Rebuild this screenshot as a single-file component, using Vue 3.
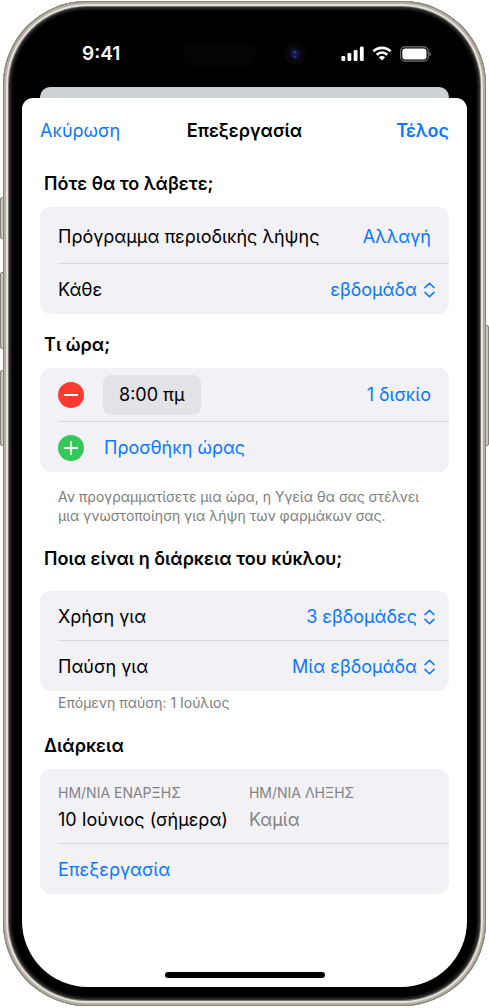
<template>
  <div class="stage">
    <span class="side-key action" />
    <span class="side-key volume-up" />
    <span class="side-key volume-down" />
    <span class="side-key power" />

    <div class="phone">
      <div class="status-bar">
        <span class="clock">9:41</span>
        <div class="island">
          <span class="speaker" />
          <svg class="camera" viewBox="0 0 24 24">
            <circle cx="12" cy="12" r="11" fill="#07060a" />
            <circle cx="12" cy="12" r="6" fill="#0c0d26" />
            <circle cx="12" cy="12" r="4" fill="#11153f" />
            <circle cx="11.5" cy="10" r="1.5" fill="#2c3a8c" />
            <circle cx="12" cy="15" r="1.3" fill="#26318a" />
          </svg>
        </div>
        <div class="status-icons">
          <svg width="23" height="15" viewBox="0 0 23 15" fill="#fff">
            <rect x="0.4" y="10" width="3.8" height="5" rx="1.2" />
            <rect x="6.5" y="7" width="3.8" height="8" rx="1.2" />
            <rect x="12.7" y="4" width="3.8" height="11" rx="1.2" />
            <rect x="18.9" y="0.5" width="3.8" height="14.5" rx="1.2" />
          </svg>
          <svg width="20" height="15" viewBox="0 0 20 15" fill="none" stroke="#fff" stroke-width="2.6">
            <path d="M1.4 5.3 C6.1 0.7 13.9 0.7 18.6 5.3" />
            <path d="M4.7 8.7 C7.7 5.8 12.3 5.8 15.3 8.7" />
            <path d="M10 14.6 L6.9 11.3 C8.7 9.7 11.3 9.7 13.1 11.3 Z" fill="#fff" stroke="none" />
          </svg>
          <svg width="32" height="16" viewBox="0 0 32 16">
            <rect x="0.6" y="0.9" width="27.6" height="14.2" rx="4.4" fill="none" stroke="#77777a" stroke-width="1.1" />
            <rect x="2.3" y="2.6" width="24.2" height="10.8" rx="3" fill="#fff" />
            <path d="M29.4 5.7 C31.4 6.5 31.4 9.5 29.4 10.3 Z" fill="#77777a" />
          </svg>
        </div>
      </div>

      <div class="sheet-behind" />
      <main class="sheet">
        <header class="nav">
          <button type="button" class="link cancel">Ακύρωση</button>
          <h1>Επεξεργασία</h1>
          <button type="button" class="link done">Τέλος</button>
        </header>

        <section>
          <h2>Πότε θα το λάβετε;</h2>
          <div class="card">
            <div class="row tall">
              <span>Πρόγραμμα περιοδικής λήψης</span>
              <button type="button" class="link">Αλλαγή</button>
            </div>
            <div class="row">
              <label for="every">Κάθε</label>
              <span class="picker">
                <select id="every" v-model="every">
                  <option>εβδομάδα</option>
                </select>
                <svg class="chevrons" viewBox="0 0 11 16"><path d="M1 5.6 L5.5 1.2 L10 5.6 M1 10.4 L5.5 14.8 L10 10.4" /></svg>
              </span>
            </div>
          </div>
        </section>

        <section>
          <h2>Τι ώρα;</h2>
          <div class="card">
            <div class="row dose">
              <button type="button" class="round remove" aria-label="Αφαίρεση">
                <svg viewBox="0 0 25 25"><path d="M6.5 12.5 H18.5" /></svg>
              </button>
              <button type="button" class="time">8:00 πμ</button>
              <button type="button" class="link amount">1 δισκίο</button>
            </div>
            <div class="row">
              <button type="button" class="add-time">
                <span class="round add">
                  <svg viewBox="0 0 25 25"><path d="M6.5 12.5 H18.5 M12.5 6.5 V18.5" /></svg>
                </span>
                Προσθήκη ώρας
              </button>
            </div>
          </div>
          <p class="hint spaced">Αν προγραμματίσετε μια ώρα, η Υγεία θα σας στέλνει μια γνωστοποίηση για λήψη των φαρμάκων σας.</p>
        </section>

        <section class="after-hint">
          <h2 class="loose">Ποια είναι η διάρκεια του κύκλου;</h2>
          <div class="card">
            <div v-for="item in cycle" :key="item.id" class="row">
              <label :for="item.id">{{ item.label }}</label>
              <span class="picker">
                <select :id="item.id" v-model="item.value">
                  <option>{{ item.value }}</option>
                </select>
                <svg class="chevrons" viewBox="0 0 11 16"><path d="M1 5.6 L5.5 1.2 L10 5.6 M1 10.4 L5.5 14.8 L10 10.4" /></svg>
              </span>
            </div>
          </div>
          <p class="hint">Επόμενη παύση: 1 Ιούλιος</p>
        </section>

        <section class="after-hint">
          <h2>Διάρκεια</h2>
          <div class="card">
            <dl class="row dates">
              <div>
                <dt>ΗΜ/ΝΙΑ ΕΝΑΡΞΗΣ</dt>
                <dd>10 Ιούνιος (σήμερα)</dd>
              </div>
              <div>
                <dt>ΗΜ/ΝΙΑ ΛΗΞΗΣ</dt>
                <dd class="muted">Καμία</dd>
              </div>
            </dl>
            <div class="row">
              <button type="button" class="link">Επεξεργασία</button>
            </div>
          </div>
        </section>

        <div class="home-indicator" />
      </main>
    </div>
  </div>
</template>

<script setup>
import { ref } from 'vue'

const every = ref('εβδομάδα')

const cycle = ref([
  { id: 'use', label: 'Χρήση για', value: '3 εβδομάδες' },
  { id: 'pause', label: 'Παύση για', value: 'Μία εβδομάδα' },
])
</script>

<style>
body {
  background: #fff;
}
</style>

<style scoped>
* {
  box-sizing: border-box;
}

.stage {
  position: relative;
  display: flex;
  min-height: 100vh;
  padding: 1px 3px 2px;
  font-family: Inter, "Liberation Sans", sans-serif;
  font-size: 18px;
  line-height: 24px;
  color: #000;
}

.side-key {
  position: absolute;
  left: 0;
  width: 6px;
  border: 1px solid #85827c;
  border-radius: 2px;
  background: #c8c5be;
}

.action {
  top: 197px;
  height: 42px;
}

.volume-up {
  top: 272px;
  height: 77px;
}

.volume-down {
  top: 370px;
  height: 76px;
}

.power {
  top: 325px;
  right: 0;
  left: auto;
  height: 121px;
}

.phone {
  position: relative;
  flex: 1;
  display: flex;
  flex-direction: column;
  padding: 7px 19px 19px;
  border-radius: 84px;
  background: #000;
  box-shadow:
    inset 0 0 0 1px #85817b,
    inset 0 0 0 3px #b2afa7,
    inset 0 0 0 5px #e4e2da,
    inset 0 0 0 6px #77746e,
    inset 0 0 3px 8px #333;
}

.status-bar {
  display: grid;
  grid-template-columns: 1fr 124px 1fr;
  align-items: center;
  height: 79px;
  padding-top: 12px;
}

.clock {
  padding-left: 60px;
  color: #fff;
  font-size: 19px;
  font-weight: 600;
}

.island {
  display: flex;
  align-items: center;
  justify-content: space-between;
}

.speaker {
  width: 73px;
  height: 24px;
  border-radius: 12px;
  background: #040404;
}

.camera {
  width: 24px;
  height: 24px;
}

.status-icons {
  display: flex;
  align-items: center;
  justify-content: flex-end;
  gap: 8px;
  padding-right: 35px;
}

.sheet-behind {
  height: 11px;
  margin: 0 18px;
  border-radius: 10px 10px 0 0;
  background: #cdd2d5;
}

.sheet {
  flex: 1;
  display: flex;
  flex-direction: column;
  padding: 0 18px 9px;
  border-radius: 11px 11px 66px 66px;
  background: #fff;
}

.nav {
  display: grid;
  grid-template-columns: 1fr auto 1fr;
  align-items: center;
  height: 64px;
  padding-top: 2px;
}

button,
select {
  margin: 0;
  padding: 0;
  border: 0;
  background: none;
  color: #0a78ff;
  font: inherit;
  cursor: pointer;
}

.cancel {
  justify-self: start;
}

.done {
  justify-self: end;
  font-weight: 600;
}

h1,
h2 {
  margin: 0;
  font-size: 18px;
  font-weight: 600;
}

h2 {
  padding: 10px 4px 11px;
}

section + section h2 {
  padding-top: 19px;
}

section + .after-hint h2 {
  padding-top: 22px;
}

section + .after-hint h2.loose {
  padding-bottom: 20px;
}

.card {
  border-radius: 11px;
  background: #f2f1f6;
}

.row {
  position: relative;
  display: flex;
  align-items: center;
  justify-content: space-between;
  min-height: 50px;
  padding: 2px 18px 0;
}

.row.tall {
  min-height: 57px;
}

.row.dose {
  justify-content: flex-start;
  min-height: 54px;
  padding-top: 0;
}

.row + .row::before {
  content: "";
  position: absolute;
  top: -1px;
  right: 0;
  left: 18px;
  height: 1px;
  background: #d9d8dd;
}

.picker {
  display: flex;
  align-items: center;
  gap: 7px;
  margin-right: -4px;
}

select {
  appearance: none;
  text-align-last: right;
}

.chevrons {
  width: 11px;
  height: 16px;
  fill: none;
  stroke: #0a78ff;
  stroke-width: 1.5;
  stroke-linecap: round;
  stroke-linejoin: round;
}

.round {
  flex: none;
  width: 26px;
  height: 26px;
  border-radius: 50%;
}

.round svg {
  display: block;
  width: 100%;
  fill: none;
  stroke: #fff;
  stroke-width: 1.7;
  stroke-linecap: round;
}

.remove {
  background: #ff3b30;
}

.add {
  background: #34c759;
}

.time {
  height: 40px;
  margin-left: 19px;
  padding: 0 16px;
  border-radius: 8px;
  background: #e3e2e7;
  color: #000;
}

.amount {
  margin-left: auto;
}

.add-time {
  display: flex;
  align-items: center;
  gap: 20px;
}

.hint {
  margin: 0;
  padding: 2px 18px 0;
  color: #7d7d80;
  font-size: 14px;
  line-height: 19px;
}

.hint.spaced {
  padding-top: 15px;
}

.dates {
  justify-content: flex-start;
  gap: 21px;
  min-height: 75px;
  margin: 0;
}

dt {
  color: #838387;
  font-size: 14px;
}

dd {
  margin: 0;
  line-height: 30px;
}

.muted {
  color: #838387;
}

.home-indicator {
  width: 160px;
  height: 6px;
  margin: auto auto 0;
  border-radius: 3px;
  background: #000;
}
</style>
